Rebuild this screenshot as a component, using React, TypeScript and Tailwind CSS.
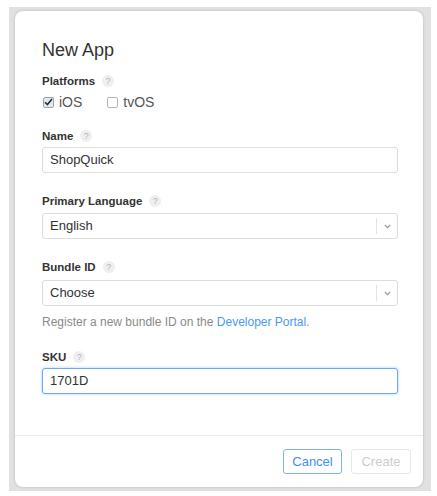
import React from 'react';

function Help() {
  return (
    <span className="ml-[7px] inline-flex h-[12px] w-[12px] items-center justify-center rounded-full bg-[#efefef] text-[9px] font-normal leading-none text-[#b3b3b3]">
      ?
    </span>
  );
}

function Label({ text }: { text: string }) {
  return (
    <div className="flex h-[16px] items-center text-[11.5px] font-bold leading-[16px] text-[#333333]">
      {text}
      <Help />
    </div>
  );
}

function Checkbox({ checked, label }: { checked: boolean; label: string }) {
  return (
    <label className="flex items-center gap-[5px] text-[14px] text-[#555555]">
      <span
        className={`flex h-[11px] w-[11px] items-center justify-center rounded-[2px] border ${
          checked ? 'border-[#9aa4b1] bg-[#e3e9f1]' : 'border-[#b5b5b5] bg-white'
        }`}
      >
        {checked && (
          <svg width="9" height="8" viewBox="0 0 9 8" fill="none">
            <path d="M1 4.2 L3.4 6.6 L8 1" stroke="#2b2b2b" strokeWidth="1.5" />
          </svg>
        )}
      </span>
      {label}
    </label>
  );
}

function Select({ value }: { value: string }) {
  return (
    <div className="flex h-[26px] items-center rounded-[3px] border border-[#dddddd] bg-white">
      <span className="flex-1 pl-[7px] text-[13px] text-[#333333]">{value}</span>
      <span className="h-[16px] w-px bg-[#e3e3e3]" />
      <span className="flex w-[20px] items-center justify-center">
        <svg width="7" height="5" viewBox="0 0 7 5" fill="none">
          <path d="M0.8 1 L3.5 3.7 L6.2 1" stroke="#9a9a9a" strokeWidth="1.1" />
        </svg>
      </span>
    </div>
  );
}

export default function App() {
  return (
    <div
      className="min-h-screen bg-white pl-[9px] pt-[7px]"
      style={{ fontFamily: '"Liberation Sans", Arial, sans-serif' }}
    >
      <div className="h-[484px] w-[422px] bg-[#e1e1e1] pl-[6px] pt-[4px]">
        <div className="flex h-[476px] w-[408px] flex-col rounded-[8px] bg-white shadow-[0_0_3px_rgba(0,0,0,0.18)]">
          {/* Body */}
          <div className="flex-1 pl-[27px] pr-[25px] pt-[28px]">
            <h1 className="text-[18px] font-normal leading-[22px] text-[#333333]">New App</h1>

            <div className="mt-[12px]">
              <Label text="Platforms" />
              <div className="mt-[5px] flex h-[16px] items-center gap-[25px] pl-px">
                <Checkbox checked label="iOS" />
                <Checkbox checked={false} label="tvOS" />
              </div>
            </div>

            <div className="mt-[18px]">
              <Label text="Name" />
              <div className="mt-[3px] flex h-[26px] items-center rounded-[3px] border border-[#dddddd] pl-[7px] text-[13px] text-[#333333]">
                ShopQuick
              </div>
            </div>

            <div className="mt-[20px]">
              <Label text="Primary Language" />
              <div className="mt-[4px]">
                <Select value="English" />
              </div>
            </div>

            <div className="mt-[20px]">
              <Label text="Bundle ID" />
              <div className="mt-[5px]">
                <Select value="Choose" />
              </div>
              <p className="mt-[8px] text-[12px] leading-[16px] text-[#8a8a8a]">
                Register a new bundle ID on the{' '}
                <span className="text-[#4a9af2]">Developer Portal</span>.
              </p>
            </div>

            <div className="mt-[19px]">
              <Label text="SKU" />
              <div className="mt-[3px] flex h-[26px] items-center rounded-[3px] border border-[#6aa8f2] pl-[7px] text-[13px] text-[#333333] shadow-[0_0_3px_rgba(74,154,242,0.5)]">
                1701D
              </div>
            </div>
          </div>

          {/* Footer */}
          <div className="flex h-[52px] items-center justify-end gap-[9px] border-t border-[#e9e9e9] pr-[12px]">
            <button className="h-[25px] w-[59px] rounded-[3px] border border-[#7fb2f2] text-[13px] text-[#3f8ff0]">
              Cancel
            </button>
            <button className="h-[25px] w-[60px] rounded-[3px] border border-[#e8e8e8] text-[13px] text-[#cccccc]">
              Create
            </button>
          </div>
        </div>
      </div>
    </div>
  );
}
